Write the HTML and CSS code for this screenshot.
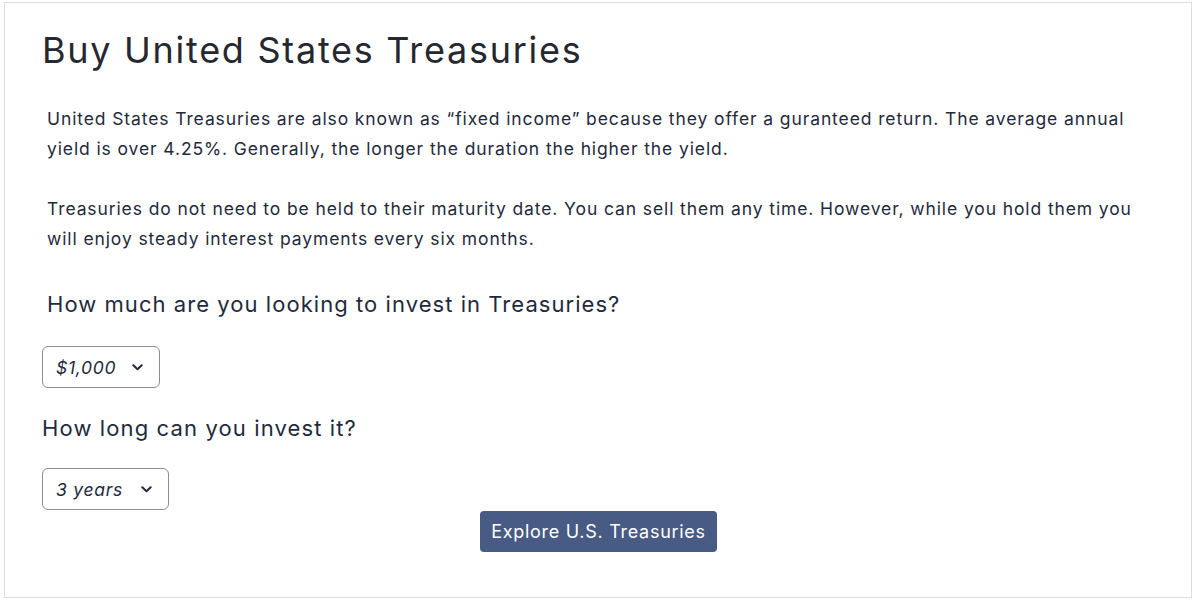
FILE: index.html
```html
<!DOCTYPE html>
<html lang="en">
<head>
    <meta charset="UTF-8">
    <meta name="viewport" content="width=device-width, initial-scale=1.0">
    <title>Buy United States Treasuries</title>
    <link rel="stylesheet" href="styles.css">
</head>
<body>
    <div class="card">
        <h1>Buy United States Treasuries</h1>

        <div class="intro">
            <p>United States Treasuries are also known as “fixed income” because they offer a guranteed return. The average annual yield is over 4.25%. Generally, the longer the duration the higher the yield.</p>
            <p>Treasuries do not need to be held to their maturity date. You can sell them any time. However, while you hold them you will enjoy steady interest payments every six months.</p>
        </div>

        <h2 class="question indented">How much are you looking to invest in Treasuries?</h2>
        <div class="select">
            <span>$1,000</span>
            <svg width="11" height="7" viewBox="0 0 11 7"><path d="M1.3 1.3 L5.5 5.3 L9.7 1.3" fill="none" stroke="#1f2a3d" stroke-width="2" stroke-linecap="round" stroke-linejoin="round"/></svg>
        </div>

        <h2 class="question second">How long can you invest it?</h2>
        <div class="select last">
            <span>3 years</span>
            <svg width="11" height="7" viewBox="0 0 11 7"><path d="M1.3 1.3 L5.5 5.3 L9.7 1.3" fill="none" stroke="#1f2a3d" stroke-width="2" stroke-linecap="round" stroke-linejoin="round"/></svg>
        </div>

        <div class="actions">
            <button class="explore-btn">Explore U.S. Treasuries</button>
        </div>
    </div>
</body>
</html>
```

FILE: styles.css
```css
* {
    margin: 0;
    padding: 0;
    box-sizing: border-box;
}

body {
    font-family: Inter, "Noto Sans", sans-serif;
    letter-spacing: 0.72px;
    background: white;
    color: #1f2a3d;
    padding: 2px 8px 6px 4px;
}

.card {
    border: 1px solid #dcdcdc;
    height: 596px;
    padding: 26px 40px 0 37px;
}

h1 {
    font-size: 36px;
    font-weight: 400;
    line-height: 43px;
    letter-spacing: 1.72px;
    color: #25282f;
    margin-bottom: 32px;
}

.intro {
    padding-left: 5px;
}

.intro p {
    font-size: 17.5px;
    line-height: 30px;
    letter-spacing: 0.89px;
    margin-bottom: 30px;
}

.intro p:last-child {
    margin-bottom: 37px;
}

.question {
    font-size: 22px;
    font-weight: 400;
    line-height: 26px;
    letter-spacing: 1.05px;
    margin-bottom: 29px;
}

.question.indented {
    padding-left: 5px;
}

.question.second {
    letter-spacing: 1.12px;
    margin-bottom: 27px;
}

.select {
    display: flex;
    width: fit-content;
    align-items: center;
    gap: 16px;
    height: 42px;
    padding: 0 16px 0 13px;
    border: 1px solid #8a8d93;
    border-radius: 6px;
    font-size: 17.5px;
    font-style: italic;
    margin-bottom: 27px;
}

.select.last {
    gap: 18px;
    margin-bottom: 1px;
}

.actions {
    display: flex;
    justify-content: center;
    padding-left: 4px;
}

.explore-btn {
    font-family: inherit;
    letter-spacing: inherit;
    font-size: 18px;
    color: white;
    background: #485b85;
    border: none;
    border-radius: 4px;
    height: 41px;
    padding: 0 11px;
}
```
